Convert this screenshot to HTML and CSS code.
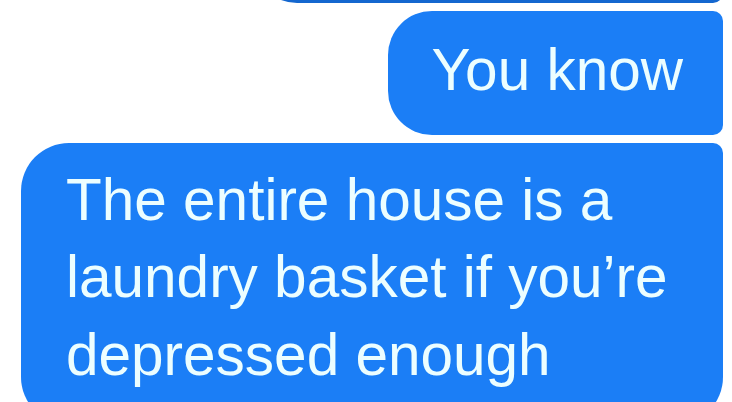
FILE: index.html
```html
<!DOCTYPE html>
<html lang="en">
<head>
<meta charset="utf-8">
<title>Messages</title>
<link rel="stylesheet" href="styles.css">
</head>
<body>
<main class="thread">
  <div class="bubble bubble-prev" aria-hidden="true"></div>
  <div class="bubble bubble-short">You know</div>
  <div class="bubble bubble-long">The entire house is a<br>laundry basket if you’re<br>depressed enough</div>
</main>
</body>
</html>
```
FILE: styles.css
```css
html, body {
  margin: 0;
  padding: 0;
  background: #ffffff;
  overflow: hidden;
}

.thread {
  display: flex;
  flex-direction: column;
  align-items: flex-end;
  gap: 8px;
  padding: 0 9px 0 21px;
  font-family: "Liberation Sans", Arial, sans-serif;
}

.bubble {
  background: #1b7ef6;
  color: #ecfeff;
  font-size: 58.5px;
  line-height: 77.5px;
  white-space: nowrap;
}

.bubble-prev {
  width: 470px;
  height: 50px;
  margin-top: -47px;
  background: #1467cf;
  border-radius: 0 0 10px 44px;
}

.bubble-short {
  padding: 20px 40px 26px 43px;
  border-radius: 44px 10px 10px 44px;
}

.bubble-long {
  align-self: stretch;
  padding: 18px 40px 32px 45px;
  border-radius: 48px 10px 48px 48px;
}
```
